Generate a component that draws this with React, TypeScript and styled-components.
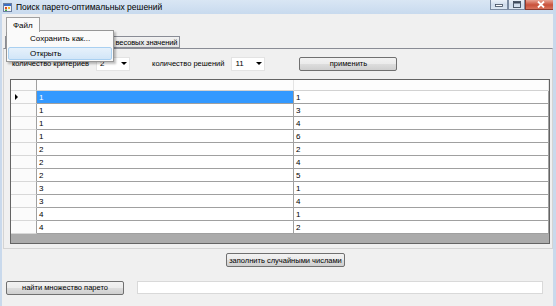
import React from "react";
import styled, { createGlobalStyle } from "styled-components";

const GlobalStyle = createGlobalStyle`
  html, body { margin: 0; padding: 0; background: #f0f0f0; }
  * { box-sizing: border-box; }
`;

const FONT = `"Liberation Sans", Arial, sans-serif`;

const Window = styled.div`
  position: relative;
  width: 556px;
  height: 306px;
  overflow: hidden;
  background: #f0f0f0;
  font-family: ${FONT};
  font-size: 8px;
  color: #000;
  display: flex;
  flex-direction: column;
  border-left: 2px solid #c9d9ec;
  border-right: 3px solid #c9d9ec;
`;

const TitleBar = styled.div`
  height: 14px;
  flex: none;
  display: flex;
  align-items: center;
  background: linear-gradient(#d9e6f4, #c8daee);
  margin: 0 -3px 0 -2px;
  padding-left: 3px;
`;

const TitleText = styled.span`
  font-size: 8.5px;
  margin-left: 4px;
  color: #000;
  flex: 1;
`;

const WinButtons = styled.div`
  display: flex;
  align-self: flex-start;
  height: 10px;
`;

const WinBtn = styled.div<{ $close?: boolean; $w: number }>`
  width: ${(p) => p.$w}px;
  height: 10px;
  border: 1px solid ${(p) => (p.$close ? "#8e3b2f" : "#7b8ba2")};
  border-top: none;
  border-radius: ${(p) => (p.$close ? "0 0 3px 0" : "0")};
  background: ${(p) =>
    p.$close
      ? "linear-gradient(#e8a393, #c9503a 55%, #d8735c)"
      : "linear-gradient(#eaf1f9, #cfdcec 55%, #dce7f3)"};
  display: flex;
  align-items: center;
  justify-content: center;
`;

const MenuBar = styled.div`
  height: 18px;
  flex: none;
  display: flex;
  align-items: flex-end;
  padding-left: 4px;
`;

const MenuTop = styled.div<{ $open?: boolean }>`
  height: 15px;
  padding: 0 6px;
  display: flex;
  align-items: center;
  font-size: 8px;
  border: 1px solid ${(p) => (p.$open ? "#a0a0a0" : "transparent")};
  border-bottom: none;
  background: ${(p) => (p.$open ? "#fafafa" : "transparent")};
  position: relative;
  z-index: 3;
`;

const Dropdown = styled.div`
  position: absolute;
  left: 4px;
  top: 30px;
  width: 108px;
  height: 32px;
  background: #fafafa;
  border: 1px solid #979797;
  box-shadow: 2px 2px 2px rgba(0, 0, 0, 0.25);
  padding: 1px;
  display: flex;
  flex-direction: column;
  gap: 1px;
  z-index: 2;
`;

const DropItem = styled.div<{ $hover?: boolean }>`
  height: 14px;
  display: flex;
  align-items: center;
  padding-left: 21px;
  font-size: 8px;
  border: 1px solid ${(p) => (p.$hover ? "#a9d0f1" : "transparent")};
  border-radius: 2px;
  background: ${(p) => (p.$hover ? "linear-gradient(#e6f1fb, #d2e6f8)" : "transparent")};
`;

const TabControl = styled.div`
  margin: 4px 0 0 1px;
  width: 550px;
  display: flex;
  flex-direction: column;
`;

const TabStrip = styled.div`
  height: 12px;
  display: flex;
  padding-left: 2px;
  align-items: flex-end;
`;

const Tab = styled.div<{ $active?: boolean; $w: number }>`
  width: ${(p) => p.$w}px;
  height: 12px;
  padding: 0 2px;
  display: flex;
  align-items: center;
  justify-content: center;
  font-size: 7.5px;
  letter-spacing: -0.1px;
  border: 1px solid #898c95;
  border-right-width: ${(p) => (p.$active ? "0" : "1px")};
  background: ${(p) => (p.$active ? "#fff" : "linear-gradient(#f2f2f2, #e3e3e3)")};
  white-space: nowrap;
`;

const TabPage = styled.div`
  height: 201px;
  border: 1px solid #d4d4d4;
  border-top: 1px solid #898c95;
  padding: 7px 3px 0 6px;
  display: flex;
  flex-direction: column;
`;

const ControlsRow = styled.div`
  height: 15px;
  display: flex;
  align-items: center;
  padding-left: 2px;
`;

const Label = styled.span<{ $ml?: number }>`
  margin-left: ${(p) => p.$ml ?? 0}px;
  font-size: 7.5px;
  white-space: nowrap;
`;

const Combo = styled.div<{ $ml: number }>`
  margin-left: ${(p) => p.$ml}px;
  width: 34px;
  height: 14px;
  background: #fff;
  border: 1px solid #e3e3e3;
  display: flex;
  align-items: center;
  justify-content: space-between;
  padding: 0 2px 0 3px;
  font-size: 8px;
`;

const Arrow = styled.span`
  width: 0;
  height: 0;
  border-left: 3px solid transparent;
  border-right: 3px solid transparent;
  border-top: 3px solid #000;
`;

const Button = styled.div<{ $w: number; $ml?: number }>`
  width: ${(p) => p.$w}px;
  height: 14px;
  margin-left: ${(p) => p.$ml ?? 0}px;
  border: 1px solid #707070;
  border-radius: 2px;
  background: linear-gradient(#f2f2f2 0%, #ebebeb 50%, #dddddd 51%, #cfcfcf 100%);
  display: flex;
  align-items: center;
  justify-content: center;
  font-size: 7.5px;
  white-space: nowrap;
`;

const Grid = styled.div`
  margin-top: 8px;
  width: 540px;
  height: 165px;
  border: 1px solid #646464;
  background: #ababab;
  display: flex;
  flex-direction: column;
`;

const GridRow = styled.div<{ $h: number }>`
  height: ${(p) => p.$h}px;
  display: flex;
  flex: none;
`;

const RowHead = styled.div`
  width: 26px;
  background: #fbfbfb;
  border-right: 1px solid #a0a0a0;
  border-bottom: 1px solid #d8d8d8;
  display: flex;
  align-items: center;
  padding-left: 4px;
`;

const HeadCell = styled.div<{ $w?: number }>`
  width: ${(p) => (p.$w ? `${p.$w}px` : "auto")};
  flex: ${(p) => (p.$w ? "none" : "1")};
  background: #fdfdfd;
  border-right: 1px solid #e4e4e4;
  border-bottom: 1px solid #d2d2d2;
`;

const Cell = styled.div<{ $w?: number; $sel?: boolean }>`
  width: ${(p) => (p.$w ? `${p.$w}px` : "auto")};
  flex: ${(p) => (p.$w ? "none" : "1")};
  background: ${(p) => (p.$sel ? "#3399ff" : "#fff")};
  color: ${(p) => (p.$sel ? "#fff" : "#000")};
  border-right: 1px solid #a0a0a0;
  border-bottom: 1px solid #a0a0a0;
  display: flex;
  align-items: center;
  padding-left: 2px;
  font-size: 8px;
`;

const Pointer = styled.span`
  width: 0;
  height: 0;
  border-top: 3px solid transparent;
  border-bottom: 3px solid transparent;
  border-left: 3px solid #000;
`;

const FillRow = styled.div`
  margin-top: 4px;
  height: 14px;
  display: flex;
  padding-left: 224px;
`;

const BottomRow = styled.div`
  margin-top: 13px;
  height: 15px;
  display: flex;
  align-items: center;
  padding-left: 4px;
`;

const TextBox = styled.div`
  margin-left: 13px;
  width: 406px;
  height: 13px;
  background: #fff;
  border: 1px solid #d9d9d9;
`;

const rows: [number, number][] = [
  [1, 1], [1, 3], [1, 4], [1, 6], [2, 2], [2, 4], [2, 5], [3, 1], [3, 4], [4, 1], [4, 2],
];

const AppIcon = () => (
  <svg width="9" height="9" viewBox="0 0 9 9">
    <rect x="0.5" y="0.5" width="8" height="8" fill="#f4f4f4" stroke="#6b7fa0" />
    <rect x="1" y="1" width="7" height="2" fill="#3d6fc4" />
    <rect x="2" y="4" width="2" height="2" fill="#d94a2a" />
    <rect x="5" y="4" width="2" height="2" fill="#f0b830" />
    <rect x="2" y="6.5" width="2" height="1.5" fill="#47a447" />
  </svg>
);

export default function App() {
  return (
    <>
      <GlobalStyle />
      <Window>
        <TitleBar>
          <AppIcon />
          <TitleText>Поиск парето-оптимальных решений</TitleText>
          <WinButtons>
            <WinBtn $w={18}>
              <svg width="8" height="4" viewBox="0 0 8 4">
                <rect x="0.5" y="1.5" width="7" height="2" fill="#fff" stroke="#3d4a5c" strokeWidth="0.8" />
              </svg>
            </WinBtn>
            <WinBtn $w={17}>
              <svg width="8" height="7" viewBox="0 0 8 7">
                <rect x="0.5" y="0.5" width="7" height="6" fill="none" stroke="#3d4a5c" strokeWidth="0.9" />
                <rect x="1" y="1" width="6" height="1.5" fill="#3d4a5c" />
              </svg>
            </WinBtn>
            <WinBtn $w={31} $close>
              <svg width="8" height="7" viewBox="0 0 8 7">
                <path d="M1 0.5 L7 6.5 M7 0.5 L1 6.5" stroke="#fff" strokeWidth="1.8" />
              </svg>
            </WinBtn>
          </WinButtons>
        </TitleBar>

        <MenuBar>
          <MenuTop $open>Файл</MenuTop>
        </MenuBar>
        <Dropdown>
          <DropItem>Сохранить как...</DropItem>
          <DropItem $hover>Открыть</DropItem>
        </Dropdown>

        <TabControl>
          <TabStrip>
            <Tab $active $w={108} />
            <Tab $w={67}>весовых значений</Tab>
          </TabStrip>
          <TabPage>
            <ControlsRow>
              <Label>количество критериев</Label>
              <Combo $ml={7}>
                <span>2</span>
                <Arrow />
              </Combo>
              <Label $ml={22}>количество решений</Label>
              <Combo $ml={7}>
                <span>11</span>
                <Arrow />
              </Combo>
              <Button $w={98} $ml={34}>применить</Button>
            </ControlsRow>
            <Grid>
              <GridRow $h={11}>
                <RowHead />
                <HeadCell $w={257} />
                <HeadCell />
              </GridRow>
              {rows.map(([a, b], i) => (
                <GridRow $h={13} key={i}>
                  <RowHead>{i === 0 && <Pointer />}</RowHead>
                  <Cell $w={257} $sel={i === 0}>{a}</Cell>
                  <Cell>{b}</Cell>
                </GridRow>
              ))}
            </Grid>
          </TabPage>
        </TabControl>

        <FillRow>
          <Button $w={119}>заполнить случайными числами</Button>
        </FillRow>
        <BottomRow>
          <Button $w={118}>найти множество парето</Button>
          <TextBox />
        </BottomRow>
      </Window>
    </>
  );
}
